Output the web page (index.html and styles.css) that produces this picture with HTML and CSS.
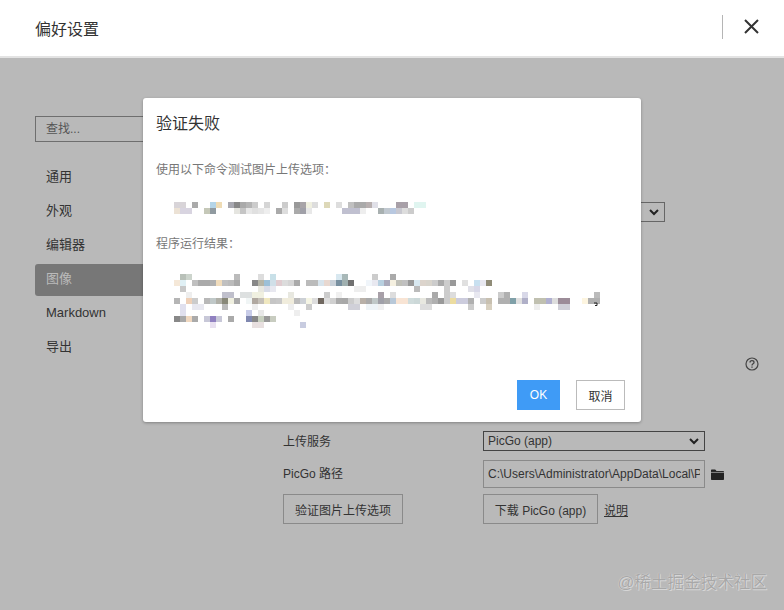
FILE: index.html
```html
<!DOCTYPE html>
<html lang="zh-CN">
<head>
    <meta charset="UTF-8">
    <title>偏好设置</title>
    <link rel="stylesheet" href="styles.css">
</head>
<body>
    <header class="top-bar">
        <h1 class="top-title">偏好设置</h1>
        <span class="top-sep"></span>
        <button class="close-btn" aria-label="关闭">
            <svg width="15" height="15" viewBox="0 0 15 15"><path d="M1 1l13 13M14 1L1 14" fill="none" stroke="#333" stroke-width="2"/></svg>
        </button>
    </header>

    <div class="settings">
        <aside class="sidebar">
            <input class="search" type="text" placeholder="查找...">
            <nav class="nav">
                <a class="nav-item">通用</a>
                <a class="nav-item">外观</a>
                <a class="nav-item">编辑器</a>
                <a class="nav-item active">图像</a>
                <a class="nav-item">Markdown</a>
                <a class="nav-item">导出</a>
            </nav>
        </aside>

        <main class="panel">
            <div class="top-select-row">
                <select class="select select-short"><option></option></select>
            </div>
            <div class="help-row">
                <svg width="14" height="14" viewBox="0 0 14 14" fill="none" stroke="#444">
                    <circle cx="7" cy="7" r="6" stroke-width="1.2"/>
                    <path d="M5 5.6C5 4.4 5.9 3.7 7 3.7S9 4.4 9 5.4C9 6.8 7 6.8 7 8.4" stroke-width="1.3"/>
                    <path d="M7 9.4v1.3" stroke-width="1.3"/>
                </svg>
            </div>
            <div class="form-grid">
                <label class="form-label form-label-service">上传服务</label>
                <select class="select select-dark"><option>PicGo (app)</option></select>
                <span></span>

                <label class="form-label">PicGo 路径</label>
                <input class="path-input" type="text" value="C:\Users\Administrator\AppData\Local\Programs\PicGo\PicGo.exe">
                <svg class="folder" width="13" height="11" viewBox="0 0 13 11"><path d="M0 1.5C0 .9.4.5 1 .5h3.2l1.3 1.4H12c.6 0 1 .4 1 1V10c0 .6-.4 1-1 1H1c-.6 0-1-.4-1-1z" fill="#222"/><path d="M0 3.4h13" stroke="#b9b9b9" stroke-width=".7"/></svg>

                <div><button class="btn">验证图片上传选项</button></div>
                <div class="download-cell">
                    <button class="btn btn-download">下载 PicGo (app)</button>
                    <a class="link">说明</a>
                </div>
                <span></span>
            </div>
        </main>
    </div>

    <div class="watermark">@稀土掘金技术社区</div>

    <!-- boite de dialogue -->
    <div class="overlay">
        <div class="dialog">
            <h2 class="dialog-title">验证失败</h2>
            <p class="dialog-label">使用以下命令测试图片上传选项：</p>
            <svg class="mosaic mosaic-cmd" width="252" height="12" viewBox="174 201 252 12">
                <rect x="174" y="201" fill="#d8d4d8"/><rect x="180" y="201" fill="#d8d4d8"/><rect x="192" y="201" fill="#aaa"/><rect x="210" y="201" fill="#b5d5e8"/><rect x="216" y="201" fill="#efdcb5"/><rect x="228" y="201" fill="#a8a8b0"/><rect x="234" y="201" fill="#888"/><rect x="240" y="201" fill="#aaa"/><rect x="246" y="201" fill="#b5b5b5"/><rect x="252" y="201" fill="#ccc"/><rect x="264" y="201" fill="#d5d5d5"/><rect x="282" y="201" fill="#ccc"/><rect x="294" y="201" fill="#999"/><rect x="300" y="201" fill="#a8a4a8"/><rect x="306" y="201" fill="#f0f0e0"/><rect x="312" y="201" fill="#ddd"/><rect x="324" y="201" fill="#ddd8b8"/><rect x="336" y="201" fill="#ddd"/><rect x="348" y="201" fill="#c0c0c0"/><rect x="354" y="201" fill="#aaa"/><rect x="360" y="201" fill="#aaa"/><rect x="366" y="201" fill="#b8b0b0"/><rect x="372" y="201" fill="#e0e0e8"/><rect x="396" y="201" fill="#a8a0a8"/><rect x="402" y="201" fill="#a8a0a8"/><rect x="414" y="201" fill="#e0f5f0"/><rect x="420" y="201" fill="#e0f5f0"/>
                <rect x="174" y="207" fill="#ece2d5"/><rect x="180" y="207" fill="#d8d4e0"/><rect x="186" y="207" fill="#d8d4e0"/><rect x="204" y="207" fill="#c5c8b8"/><rect x="210" y="207" fill="#909aa0"/><rect x="234" y="207" fill="#e5e5e0"/><rect x="240" y="207" fill="#c5c5c5"/><rect x="246" y="207" fill="#e8e8e8"/><rect x="252" y="207" fill="#e0e0e0"/><rect x="258" y="207" fill="#e5e5e5"/><rect x="264" y="207" fill="#eee"/><rect x="276" y="207" fill="#aaa"/><rect x="282" y="207" fill="#ddd"/><rect x="294" y="207" fill="#aaa"/><rect x="300" y="207" fill="#a0a0a8"/><rect x="306" y="207" fill="#e8e8e8"/><rect x="342" y="207" fill="#c0c0d0"/><rect x="348" y="207" fill="#c0c0d0"/><rect x="354" y="207" fill="#c0c0d0"/><rect x="360" y="207" fill="#eee"/><rect x="378" y="207" fill="#a8b0b0"/><rect x="384" y="207" fill="#c0c8d0"/><rect x="390" y="207" fill="#b8c8e0"/><rect x="396" y="207" fill="#c8c8d0"/><rect x="402" y="207" fill="#ddd"/><rect x="408" y="207" fill="#ccc"/>
            </svg>
            <p class="dialog-label">程序运行结果：</p>
            <svg class="mosaic mosaic-result" width="426" height="54" viewBox="174 273 426 54">
                <rect x="180" y="273" fill="#b8c0b8"/><rect x="186" y="273" fill="#ccd4cc"/><rect x="234" y="273" fill="#bbb"/><rect x="258" y="273" fill="#ddd"/><rect x="270" y="273" fill="#c8e0e8"/><rect x="336" y="273" fill="#d8e8f0"/><rect x="342" y="273" fill="#a8b8b8"/><rect x="372" y="273" fill="#ccc"/><rect x="390" y="273" fill="#aaa"/>
                <rect x="174" y="279" fill="#f5e8d8"/><rect x="180" y="279" fill="#e0f0f5"/><rect x="192" y="279" fill="#c0c0c0"/><rect x="198" y="279" fill="#aaa"/><rect x="204" y="279" fill="#aaa"/><rect x="210" y="279" fill="#b0b0b0"/><rect x="216" y="279" fill="#f0dcbc"/><rect x="222" y="279" fill="#c0c0c0"/><rect x="228" y="279" fill="#bbb"/><rect x="234" y="279" fill="#aaa"/><rect x="252" y="279" fill="#888"/><rect x="258" y="279" fill="#b5b5a8"/><rect x="264" y="279" fill="#9cc0d8"/><rect x="270" y="279" fill="#d0dfe8"/><rect x="276" y="279" fill="#e0ccd0"/><rect x="282" y="279" fill="#dcdcdc"/><rect x="288" y="279" fill="#d5d5d5"/><rect x="294" y="279" fill="#aaa"/><rect x="306" y="279" fill="#bbb"/><rect x="312" y="279" fill="#bbb"/><rect x="318" y="279" fill="#d8e4ec"/><rect x="324" y="279" fill="#e8d8d0"/><rect x="330" y="279" fill="#c8d0d8"/><rect x="336" y="279" fill="#7890a0"/><rect x="342" y="279" fill="#a0b0b0"/><rect x="348" y="279" fill="#707070"/><rect x="366" y="279" fill="#f0f5fa"/><rect x="372" y="279" fill="#e8e8f0"/><rect x="378" y="279" fill="#b8d0e0"/><rect x="384" y="279" fill="#aab"/><rect x="390" y="279" fill="#f5f0e0"/><rect x="396" y="279" fill="#c0c0b8"/><rect x="402" y="279" fill="#c0c0c0"/><rect x="408" y="279" fill="#999"/><rect x="414" y="279" fill="#d8e8f0"/><rect x="420" y="279" fill="#dcd4cc"/><rect x="426" y="279" fill="#d8d4cc"/><rect x="432" y="279" fill="#ccc"/><rect x="438" y="279" fill="#aaa"/><rect x="444" y="279" fill="#ccc"/><rect x="450" y="279" fill="#999"/><rect x="462" y="279" fill="#e0e0e0"/><rect x="474" y="279" fill="#c8e0f0"/><rect x="480" y="279" fill="#e8e8f0"/><rect x="486" y="279" fill="#908c78"/>
                <rect x="180" y="285" fill="#c8c8c8"/><rect x="258" y="285" fill="#e8e8e0"/><rect x="264" y="285" fill="#d8dce8"/><rect x="270" y="285" fill="#e8e8f0"/><rect x="354" y="285" fill="#eee"/><rect x="360" y="285" fill="#eee"/><rect x="414" y="285" fill="#bbb"/><rect x="444" y="285" fill="#ccc"/><rect x="468" y="285" fill="#e0e0e8"/><rect x="474" y="285" fill="#d8d8e8"/>
                <rect x="186" y="291" fill="#eee"/><rect x="222" y="291" fill="#c0c0cc"/><rect x="228" y="291" fill="#c0c0cc"/><rect x="240" y="291" fill="#dde0e0"/><rect x="246" y="291" fill="#dde0e0"/><rect x="252" y="291" fill="#f0f0e0"/><rect x="258" y="291" fill="#f0f0e0"/><rect x="288" y="291" fill="#e8e8e0"/><rect x="324" y="291" fill="#ccc"/><rect x="336" y="291" fill="#f0f0f0"/><rect x="378" y="291" fill="#a8a0a8"/><rect x="390" y="291" fill="#ddd"/><rect x="432" y="291" fill="#aaa"/><rect x="444" y="291" fill="#ccc"/><rect x="450" y="291" fill="#ddd"/><rect x="474" y="291" fill="#e8e8f0"/><rect x="498" y="291" fill="#ccc"/><rect x="504" y="291" fill="#b0b0b0"/><rect x="522" y="291" fill="#d8d8e8"/><rect x="594" y="291" fill="#bbb"/>
                <rect x="174" y="297" fill="#b5b5b5"/><rect x="186" y="297" fill="#eed0b8"/><rect x="192" y="297" fill="#ccc"/><rect x="204" y="297" fill="#b8b8b8"/><rect x="210" y="297" fill="#c0c8c8"/><rect x="216" y="297" fill="#b0b0a8"/><rect x="222" y="297" fill="#888878"/><rect x="228" y="297" fill="#f0f0e0"/><rect x="234" y="297" fill="#aaa"/><rect x="246" y="297" fill="#f0f5f5"/><rect x="252" y="297" fill="#b0a8a0"/><rect x="258" y="297" fill="#c5c0b8"/><rect x="264" y="297" fill="#f0e8c0"/><rect x="270" y="297" fill="#c5c5c5"/><rect x="276" y="297" fill="#c8c8c8"/><rect x="282" y="297" fill="#f0ecdc"/><rect x="288" y="297" fill="#f0ecdc"/><rect x="294" y="297" fill="#bbb"/><rect x="300" y="297" fill="#ccd0d5"/><rect x="306" y="297" fill="#f5f5e5"/><rect x="312" y="297" fill="#ddd"/><rect x="318" y="297" fill="#706860"/><rect x="324" y="297" fill="#ddd"/><rect x="330" y="297" fill="#d0d0d0"/><rect x="336" y="297" fill="#aaa"/><rect x="342" y="297" fill="#a8a8a8"/><rect x="348" y="297" fill="#ccc"/><rect x="354" y="297" fill="#ddd"/><rect x="360" y="297" fill="#b8b0a8"/><rect x="366" y="297" fill="#aaa"/><rect x="372" y="297" fill="#c0c8c8"/><rect x="378" y="297" fill="#a0a0a8"/><rect x="384" y="297" fill="#aaa"/><rect x="390" y="297" fill="#b8c8d8"/><rect x="396" y="297" fill="#f8e4d4"/><rect x="402" y="297" fill="#f8e4d4"/><rect x="408" y="297" fill="#d0dcdc"/><rect x="414" y="297" fill="#ccd8d8"/><rect x="420" y="297" fill="#e8e8e0"/><rect x="426" y="297" fill="#bbb"/><rect x="432" y="297" fill="#b0b0b0"/><rect x="438" y="297" fill="#999"/><rect x="444" y="297" fill="#ccc"/><rect x="450" y="297" fill="#ecdca0"/><rect x="456" y="297" fill="#ccd"/><rect x="462" y="297" fill="#ccd"/><rect x="468" y="297" fill="#b0b0b0"/><rect x="480" y="297" fill="#ccc"/><rect x="486" y="297" fill="#c8c0b0"/><rect x="498" y="297" fill="#b0b0b0"/><rect x="504" y="297" fill="#b0b0b0"/><rect x="510" y="297" fill="#80a0a8"/><rect x="516" y="297" fill="#e0e0e0"/><rect x="522" y="297" fill="#b0b0c8"/><rect x="534" y="297" fill="#c0c0b0"/><rect x="540" y="297" fill="#c0c0b0"/><rect x="546" y="297" fill="#b0b0d0"/><rect x="552" y="297" fill="#ddd"/><rect x="558" y="297" fill="#9c8c98"/><rect x="564" y="297" fill="#9c8c98"/><rect x="582" y="297" fill="#fdf5e0"/><rect x="588" y="297" fill="#b0b0b0"/><rect x="594" y="297" fill="#b0b0b0"/>
                <rect x="180" y="303" fill="#e0e0ee"/><rect x="192" y="303" fill="#e8e8f0"/><rect x="198" y="303" fill="#e8e8f0"/><rect x="222" y="303" fill="#bbb"/><rect x="252" y="303" fill="#eee"/><rect x="288" y="303" fill="#eee"/><rect x="306" y="303" fill="#ccc"/><rect x="348" y="303" fill="#d0d0d8"/><rect x="354" y="303" fill="#d0d0d8"/><rect x="366" y="303" fill="#eef4f8"/><rect x="372" y="303" fill="#eef4f8"/><rect x="378" y="303" fill="#f0f0f0"/><rect x="420" y="303" fill="#ddd"/><rect x="426" y="303" fill="#ddd"/><rect x="468" y="303" fill="#ccc"/><rect x="486" y="303" fill="#d8d0c0"/><rect x="534" y="303" fill="#eee"/><rect x="558" y="303" fill="#d0d0d8"/><rect x="564" y="303" fill="#d0d0d8"/>
                <rect x="180" y="309" fill="#e0e0ee"/><rect x="246" y="309" fill="#c8cce8"/><rect x="258" y="309" fill="#e8e8e8"/><rect x="294" y="309" fill="#eee"/>
                <rect x="174" y="315" fill="#888"/><rect x="180" y="315" fill="#a8a8a8"/><rect x="186" y="315" fill="#f0d8c0"/><rect x="192" y="315" fill="#aaa"/><rect x="204" y="315" fill="#c8c8d8"/><rect x="210" y="315" fill="#9080c0"/><rect x="216" y="315" fill="#c8c8d8"/><rect x="228" y="315" fill="#aaa"/><rect x="246" y="315" fill="#8088b0"/><rect x="252" y="315" fill="#888"/><rect x="258" y="315" fill="#c8d0c0"/><rect x="264" y="315" fill="#999"/><rect x="270" y="315" fill="#c8ccc0"/>
                <rect x="210" y="321" fill="#e8e0f0"/><rect x="252" y="321" fill="#e8e0e0"/><rect x="258" y="321" fill="#e8e0e0"/><rect x="300" y="321" fill="#c8cce0"/>
                <path d="M594 302h3v2.5h-2" fill="none" stroke="#222"/>
            </svg>
            <div class="dialog-actions">
                <button class="dialog-btn dialog-ok">OK</button>
                <button class="dialog-btn dialog-cancel">取消</button>
            </div>
        </div>
    </div>
</body>
</html>
```

FILE: styles.css
```css
:root {
    --backdrop: #b9b9b9;
    --text-dark: #333333;
    --line-grey: #8a8a8a;
    --blue: #3f9bf6;
}

* {
    margin: 0;
    padding: 0;
    box-sizing: border-box;
    font-family: "Liberation Sans", "Noto Sans CJK SC", sans-serif;
}

html, body {
    height: 100%;
    overflow: hidden;
}

body {
    background-color: var(--backdrop);
    color: var(--text-dark);
}

/* barre du haut */
.top-bar {
    height: 58px;
    background-color: #fff;
    border-bottom: 2px solid #e3e3e3;
    display: flex;
    align-items: center;
    padding-left: 35px;
}

.top-title {
    flex: 1;
    font-size: 16px;
    font-weight: 400;
}

.top-sep {
    width: 1px;
    height: 24px;
    background-color: #b5b5b5;
    margin-bottom: 3px;
}

.close-btn {
    width: 15px;
    height: 15px;
    margin: 0 25px 3px 21px;
    border: none;
    background: none;
    display: flex;
}

/* colonne de gauche */
.settings {
    display: flex;
    padding-left: 35px;
}

.sidebar {
    width: 165px;
    padding-top: 58px;
}

.search {
    display: block;
    width: 100%;
    height: 26px;
    padding-left: 10px;
    font-size: 12px;
    background: transparent;
    border: 1px solid #6e6e6e;
    outline: none;
}

.search::placeholder {
    color: #555;
    opacity: 1;
}

.nav {
    margin-top: 20px;
}

.nav-item {
    display: block;
    height: 32px;
    line-height: 30px;
    margin-bottom: 2px;
    padding-left: 11px;
    font-size: 13px;
    color: #333;
}

.nav-item.active {
    background-color: #777;
    color: #bbb;
    border-radius: 3px;
}

/* panneau de droite */
.panel {
    flex: 1;
    margin-left: 83px;
    padding-top: 144px;
    font-size: 12px;
}

.top-select-row {
    padding-left: 200px;
}

.select {
    display: block;
    appearance: none;
    font-size: 12px;
    color: var(--text-dark);
    height: 20px;
    padding-left: 4px;
    background-color: transparent;
    background-image: url("data:image/svg+xml,%3Csvg xmlns='http://www.w3.org/2000/svg' width='10' height='7'%3E%3Cpath d='M1 1l4 4 4-4' fill='none' stroke='%23222' stroke-width='2'/%3E%3C/svg%3E");
    background-repeat: no-repeat;
    background-position: right 5px center;
    outline: none;
}

.select-short {
    width: 182px;
    border: 1px solid #666;
}

.select-dark {
    width: 222px;
    border: 1px solid #444;
    margin-bottom: 3px;
}

.help-row {
    display: flex;
    justify-content: flex-end;
    width: 476px;
    height: 14px;
    margin-top: 135px;
}

.form-grid {
    display: grid;
    grid-template-columns: 200px 222px 1fr;
    align-items: center;
    row-gap: 6px;
    margin-top: 60px;
}

.form-label {
    font-size: 12px;
    margin-bottom: 4px;
}

.form-label-service {
    margin-bottom: 5px;
}

.path-input {
    display: block;
    width: 222px;
    height: 28px;
    padding: 0 4px;
    font-size: 12px;
    color: var(--text-dark);
    background: transparent;
    border: 1px solid var(--line-grey);
    outline: none;
}

.folder {
    margin-left: 6px;
}

.download-cell {
    display: flex;
    align-items: center;
    white-space: nowrap;
}

.btn {
    width: 120px;
    height: 30px;
    font-size: 12px;
    color: var(--text-dark);
    background: transparent;
    border: 1px solid var(--line-grey);
}

.btn-download {
    width: 115px;
}

.link {
    margin-left: 6px;
    font-size: 12px;
    text-decoration: underline;
}

.watermark {
    position: absolute;
    right: 17px;
    top: 569px;
    font-size: 16.6px;
    color: #a8a8a8;
    text-shadow: 0 0 1px #eaeaea, 1px 1px 0 #d4d4d4;
    white-space: nowrap;
}

/* boite de dialogue */
.overlay {
    position: absolute;
    top: 98px;
    left: 0;
    right: 0;
    display: flex;
    justify-content: center;
}

.dialog {
    width: 498px;
    height: 324px;
    padding: 15px 16px 0 13px;
    background-color: #fff;
    border-radius: 3px;
    box-shadow: 0 1px 3px rgba(0, 0, 0, 0.3);
}

.dialog-title {
    font-size: 16px;
    font-weight: 400;
    line-height: 22px;
}

.dialog-label {
    font-size: 12px;
    line-height: 16px;
    color: #777;
}

.dialog-title + .dialog-label {
    margin-top: 27px;
}

.mosaic {
    display: block;
    margin-left: 18px;
}

.mosaic rect {
    width: 6px;
    height: 6px;
}

.mosaic-cmd {
    margin-top: 24px;
    margin-bottom: 22px;
}

.mosaic-result {
    margin-top: 22px;
}

.dialog-actions {
    display: flex;
    justify-content: flex-end;
    gap: 16px;
    margin-top: 52px;
}

.dialog-btn {
    height: 30px;
    font-size: 12px;
}

.dialog-ok {
    width: 43px;
    border: none;
    background-color: var(--blue);
    color: #fff;
}

.dialog-cancel {
    width: 49px;
    background-color: #fff;
    border: 1px solid #bbb;
    color: var(--text-dark);
}
```
